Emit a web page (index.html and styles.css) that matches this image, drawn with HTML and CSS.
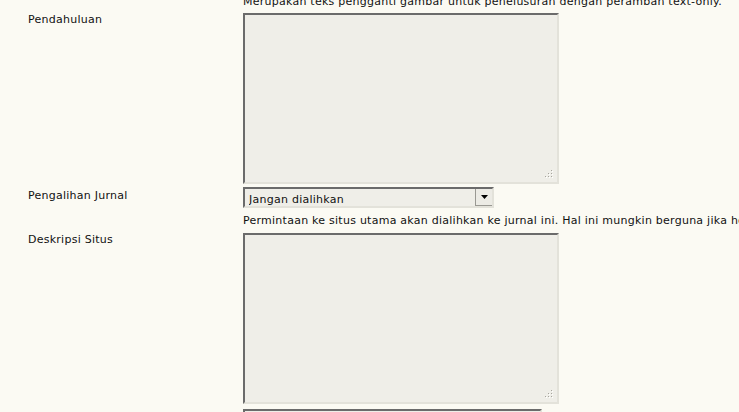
FILE: index.html
```html
<!DOCTYPE html>
<html lang="id">
<head>
<meta charset="utf-8">
<title>Pengaturan Situs</title>
<link rel="stylesheet" href="styles.css">
</head>
<body>
<form class="setup">
  <div class="row r0">
    <div class="label"></div>
    <div class="value">
      <div class="hint">Merupakan teks pengganti gambar untuk penelusuran dengan peramban text-only.</div>
    </div>
  </div>
  <div class="row r1">
    <label class="label" for="intro">Pendahuluan</label>
    <div class="value">
      <div class="area-wrap">
        <textarea id="intro" class="area"></textarea>
        <span class="grip"><svg width="9" height="9" viewBox="0 0 9 9"><g fill="#ffffff"><rect x="7" y="1" width="1" height="1"/><rect x="4" y="4" width="1" height="1"/><rect x="7" y="4" width="1" height="1"/><rect x="1" y="7" width="1" height="1"/><rect x="4" y="7" width="1" height="1"/><rect x="7" y="7" width="1" height="1"/></g><g fill="#a6a59e"><rect x="6" y="0" width="1" height="1"/><rect x="3" y="3" width="1" height="1"/><rect x="6" y="3" width="1" height="1"/><rect x="0" y="6" width="1" height="1"/><rect x="3" y="6" width="1" height="1"/><rect x="6" y="6" width="1" height="1"/></g></svg></span>
      </div>
    </div>
  </div>
  <div class="row r2">
    <label class="label lab-sel" for="redirect">Pengalihan Jurnal</label>
    <div class="value">
      <div class="select-wrap">
        <select id="redirect" class="select">
          <option>Jangan dialihkan</option>
        </select>
        <span class="arrow"><svg width="7" height="4" viewBox="0 0 7 4"><path d="M0 0H7L3.5 4Z" fill="#000"/></svg></span>
      </div>
      <div class="hint hint-sel">Permintaan ke situs utama akan dialihkan ke jurnal ini. Hal ini mungkin berguna jika hosting hanya untuk satu jurnal, misalnya.</div>
    </div>
  </div>
  <div class="row r3">
    <label class="label" for="desc">Deskripsi Situs</label>
    <div class="value">
      <div class="area-wrap">
        <textarea id="desc" class="area"></textarea>
        <span class="grip"><svg width="9" height="9" viewBox="0 0 9 9"><g fill="#ffffff"><rect x="7" y="1" width="1" height="1"/><rect x="4" y="4" width="1" height="1"/><rect x="7" y="4" width="1" height="1"/><rect x="1" y="7" width="1" height="1"/><rect x="4" y="7" width="1" height="1"/><rect x="7" y="7" width="1" height="1"/></g><g fill="#a6a59e"><rect x="6" y="0" width="1" height="1"/><rect x="3" y="3" width="1" height="1"/><rect x="6" y="3" width="1" height="1"/><rect x="0" y="6" width="1" height="1"/><rect x="3" y="6" width="1" height="1"/><rect x="6" y="6" width="1" height="1"/></g></svg></span>
      </div>
    </div>
  </div>
  <div class="row r4">
    <div class="label"></div>
    <div class="value">
      <input class="text" type="text">
    </div>
  </div>
</form>
</body>
</html>
```

FILE: styles.css
```css
html, body {
  margin: 0;
  padding: 0;
  background: #fbfaf3;
  overflow: hidden;
  height: 100%;
}

body {
  font-family: "DejaVu Sans", Verdana, sans-serif;
  font-size: 11px;
  line-height: 13px;
  letter-spacing: 0.25px;
  color: #111;
}

.setup {
  margin: -5px 0 0 0;
  padding-left: 28px;
}

.row {
  display: flex;
  align-items: flex-start;
}

.label {
  flex: 0 0 215px;
  display: block;
}

.value {
  flex: 1 1 auto;
  min-width: 0;
}

.hint {
  white-space: nowrap;
}

.r1 { margin-top: 5px; }
.r2 { margin-top: 3px; }
.r3 { margin-top: 6px; }
.r4 { margin-top: 5px; }

.lab-sel { padding-top: 2px; }
.hint-sel { margin-top: 6px; }

.area-wrap {
  position: relative;
  width: 316px;
  height: 171px;
}

.area {
  display: block;
  box-sizing: border-box;
  width: 316px;
  height: 171px;
  margin: 0;
  padding: 2px;
  resize: none;
  background: #efeee8;
  border: 2px solid;
  border-color: #6b6b6b #e3e2da #e3e2da #6b6b6b;
  font: inherit;
  outline: none;
}

.grip {
  position: absolute;
  right: 5px;
  bottom: 5px;
  width: 9px;
  height: 9px;
  line-height: 0;
}

.select-wrap {
  position: relative;
  width: 251px;
  height: 21px;
}

.select {
  display: block;
  box-sizing: border-box;
  width: 251px;
  height: 21px;
  margin: 0;
  padding: 3px 0 0 4px;
  -webkit-appearance: none;
  appearance: none;
  background: #efeee8;
  border: 2px solid;
  border-color: #6b6b6b #e3e2da #e3e2da #6b6b6b;
  border-radius: 0;
  font: inherit;
  letter-spacing: 0.25px;
  color: #111;
  outline: none;
}

.arrow {
  position: absolute;
  top: 2px;
  right: 2px;
  box-sizing: border-box;
  width: 17px;
  height: 17px;
  background: #ecebe5;
  border-left: 1px solid #9a9993;
  border-bottom: 1px solid #9a9993;
  display: flex;
  align-items: center;
  justify-content: center;
  pointer-events: none;
}

.text {
  display: block;
  box-sizing: border-box;
  width: 299px;
  height: 21px;
  margin: 0;
  padding: 0 3px;
  background: #efeee8;
  border: 2px solid;
  border-color: #6b6b6b #e3e2da #e3e2da #6b6b6b;
  font: inherit;
  outline: none;
}
```
